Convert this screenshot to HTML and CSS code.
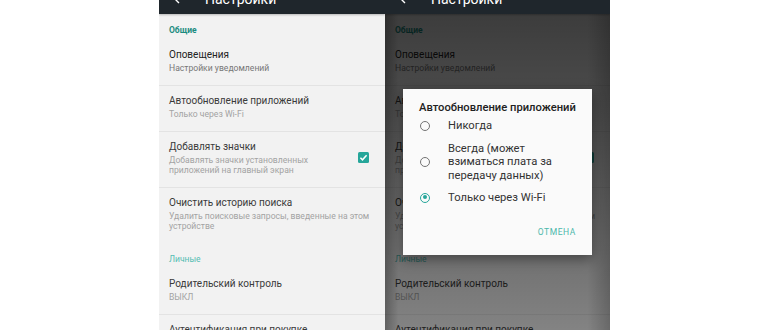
FILE: index.html
```html
<!DOCTYPE html>
<html lang="ru">
  <head>
    <meta charset="UTF-8" />
    <title>Настройки</title>
    <link rel="stylesheet" href="styles.css">
  </head>
  <body>
    <div class="screens">
      <div class="phone">
        <div class="appbar">
          <div class="appbar-row">
            <svg viewBox="0 0 12 12"><path d="M11 6H2M6 2L2 6l4 4" fill="none" stroke="#fff" stroke-width="1.4"/></svg>
            <span>Настройки</span>
          </div>
        </div>
        <div class="cat">Общие</div>
        <div class="item">
          <div class="title title-dark">Оповещения</div>
          <div class="sub sub-dark">Настройки уведомлений</div>
        </div>
        <div class="item">
          <div class="title">Автообновление приложений</div>
          <div class="sub">Только через Wi-Fi</div>
        </div>
        <div class="item item-check">
          <div>
            <div class="title">Добавлять значки</div>
            <div class="sub">Добавлять значки установленных<br>приложений на главный экран</div>
          </div>
          <svg class="check" viewBox="0 0 11 11"><rect width="11" height="11" rx="1.5" fill="#26a69a"/><path d="M2.4 5.7l2.1 2.1 4.1-4.5" fill="none" stroke="#fff" stroke-width="1.5"/></svg>
        </div>
        <div class="item item-last">
          <div class="title">Очистить историю поиска</div>
          <div class="sub">Удалить поисковые запросы, введенные на этом<br>устройстве</div>
        </div>
        <div class="cat cat-light">Личные</div>
        <div class="item">
          <div class="title">Родительский контроль</div>
          <div class="sub">ВЫКЛ</div>
        </div>
        <div class="item">
          <div class="title">Аутентификация при покупке</div>
          <div class="sub">Для всех покупок</div>
        </div>
      </div>

      <div class="phone phone-dim">
        <div class="appbar">
          <div class="appbar-row">
            <svg viewBox="0 0 12 12"><path d="M11 6H2M6 2L2 6l4 4" fill="none" stroke="#fff" stroke-width="1.4"/></svg>
            <span>Настройки</span>
          </div>
        </div>
        <div class="cat">Общие</div>
        <div class="item">
          <div class="title title-dark">Оповещения</div>
          <div class="sub sub-dark">Настройки уведомлений</div>
        </div>
        <div class="item">
          <div class="title">Автообновление приложений</div>
          <div class="sub">Только через Wi-Fi</div>
        </div>
        <div class="item item-check">
          <div>
            <div class="title">Добавлять значки</div>
            <div class="sub">Добавлять значки установленных<br>приложений на главный экран</div>
          </div>
          <svg class="check" viewBox="0 0 11 11"><rect width="11" height="11" rx="1.5" fill="#26a69a"/><path d="M2.4 5.7l2.1 2.1 4.1-4.5" fill="none" stroke="#fff" stroke-width="1.5"/></svg>
        </div>
        <div class="item item-last">
          <div class="title">Очистить историю поиска</div>
          <div class="sub">Удалить поисковые запросы, введенные на этом<br>устройстве</div>
        </div>
        <div class="cat cat-light">Личные</div>
        <div class="item">
          <div class="title">Родительский контроль</div>
          <div class="sub">ВЫКЛ</div>
        </div>
        <div class="item">
          <div class="title">Аутентификация при покупке</div>
          <div class="sub">Для всех покупок</div>
        </div>

        <div class="scrim"></div>

        <div class="dialog">
          <div class="dialog-title">Автообновление приложений</div>
          <div class="option">
            <span class="radio"></span>
            <span>Никогда</span>
          </div>
          <div class="option">
            <span class="radio"></span>
            <span>Всегда (может<br>взиматься плата за<br>передачу данных)</span>
          </div>
          <div class="option">
            <span class="radio radio-on"></span>
            <span>Только через Wi-Fi</span>
          </div>
          <div class="dialog-actions">ОТМЕНА</div>
        </div>
      </div>
    </div>
  </body>
</html>
```

FILE: styles.css
```css
body {
  margin: 0;
  background-color: #fff;
  font-family: Roboto, "Noto Sans", sans-serif;
}
.screens {
  display: flex;
  height: 330px;
  padding-left: 159px;
  overflow: hidden;
}
.phone {
  position: relative;
  width: 226px;
  height: 330px;
  flex: none;
  overflow: hidden;
  background-color: #f2f2f2;
}
.phone-dim {
  width: 225px;
}
.appbar {
  position: relative;
  z-index: 1;
  height: 14px;
  overflow: hidden;
  background-color: #1f262c;
  box-shadow: 0 1px 2px rgba(0, 0, 0, 0.25);
}
.appbar-row {
  display: flex;
  align-items: center;
  height: 20px;
  margin-top: -11px;
  padding-left: 14px;
  color: #fff;
  font-size: 14px;
}
.appbar-row svg {
  width: 12px;
  height: 12px;
  margin-right: 20px;
}
.cat {
  padding: 10px 10px 4px;
  font-size: 8.5px;
  line-height: 12px;
  font-weight: bold;
  color: #1b8c80;
}
.cat-light {
  font-weight: normal;
  color: #55bdb2;
}
.item {
  padding: 8px 10px 12px;
  border-bottom: 1px solid #e3e3e3;
}
.item-last {
  border-bottom: none;
}
.item-check {
  display: flex;
  align-items: center;
  justify-content: space-between;
  padding-right: 16px;
}
.check {
  width: 11px;
  height: 11px;
  flex: none;
}
.title {
  font-size: 10px;
  line-height: 13px;
  color: #3a3a3a;
}
.title-dark {
  color: #222;
}
.sub {
  margin-top: 2px;
  font-size: 8.6px;
  line-height: 10px;
  white-space: nowrap;
  color: #a3a3a3;
}
.sub-dark {
  color: #777;
}
.scrim {
  position: absolute;
  inset: 0;
  background:
    linear-gradient(to right, rgba(0, 0, 0, 0.25), rgba(0, 0, 0, 0) 6%, rgba(0, 0, 0, 0) 90%, rgba(0, 0, 0, 0.2)),
    linear-gradient(rgba(0, 0, 0, 0.76), rgba(0, 0, 0, 0.68) 35%, rgba(0, 0, 0, 0.46));
}
.dialog {
  position: absolute;
  left: 18px;
  top: 89px;
  width: 189px;
  height: 166px;
  box-sizing: border-box;
  padding-top: 12px;
  background-color: #fafafa;
  box-shadow: 0 4px 12px rgba(0, 0, 0, 0.4);
}
.dialog-title {
  padding: 0 16px;
  font-size: 11.2px;
  line-height: 14px;
  font-weight: 500;
  color: #212121;
}
.option {
  display: flex;
  align-items: center;
  padding: 4.4px 10px 4.4px 17px;
  font-size: 11.2px;
  line-height: 13.5px;
  color: #333;
}
.radio {
  position: relative;
  width: 10px;
  height: 10px;
  flex: none;
  box-sizing: border-box;
  margin-right: 18px;
  border: 1.5px solid #737373;
  border-radius: 50%;
}
.radio-on {
  border-color: #26a69a;
}
.radio-on::after {
  content: "";
  position: absolute;
  left: 1.5px;
  top: 1.5px;
  width: 4px;
  height: 4px;
  border-radius: 50%;
  background-color: #26a69a;
}
.dialog-actions {
  padding: 17px 16px 0;
  text-align: right;
  font-size: 8.5px;
  line-height: 12px;
  letter-spacing: 0.6px;
  color: #4cb8ab;
}
```
